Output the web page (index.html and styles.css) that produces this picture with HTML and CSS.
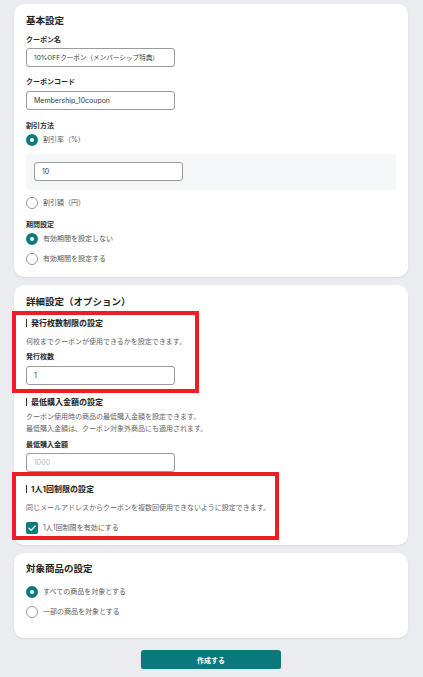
FILE: index.html
```html
<!DOCTYPE html>
<html lang="ja">
<head>
<meta charset="utf-8">
<title>クーポン作成</title>
<link rel="stylesheet" href="styles.css">
</head>
<body>
<main class="page">
  <section class="card card-basic">
    <h2 class="card-title">基本設定</h2>
    <div class="field-label m8">クーポン名</div>
    <div class="input m3"><span class="narrow">10%OFFクーポン（メンバーシップ特典）</span></div>
    <div class="field-label m10">クーポンコード</div>
    <div class="input m4">Membership_10coupon</div>
    <div class="field-label m11">割引方法</div>
    <div class="choice m2"><span class="radio checked"></span><span class="choice-text">割引率（%）</span></div>
    <div class="panel m7"><div class="input">10</div></div>
    <div class="choice m6"><span class="radio"></span><span class="choice-text">割引額（円）</span></div>
    <div class="field-label m10">期間設定</div>
    <div class="choice m2"><span class="radio checked"></span><span class="choice-text">有効期間を設定しない</span></div>
    <div class="choice m55"><span class="radio"></span><span class="choice-text">有効期間を設定する</span></div>
  </section>

  <section class="card card-detail">
    <h2 class="card-title">詳細設定（オプション）</h2>
    <h3 class="sub-title s1"><span class="bar"></span>発行枚数制限の設定</h3>
    <p class="desc d1">何枚までクーポンが使用できるかを設定できます。</p>
    <div class="field-label m55">発行枚数</div>
    <div class="input m35">1</div>
    <h3 class="sub-title s2"><span class="bar"></span>最低購入金額の設定</h3>
    <p class="desc desc-multi">クーポン使用時の商品の最低購入金額を設定できます。<br>最低購入金額は、クーポン対象外商品にも適用されます。</p>
    <div class="field-label m5">最低購入金額</div>
    <div class="input placeholder m3">1000</div>
    <h3 class="sub-title s3"><span class="bar"></span>1人1回制限の設定</h3>
    <p class="desc d1">同じメールアドレスからクーポンを複数回使用できないように設定できます。</p>
    <div class="choice m8"><span class="checkbox"><svg viewBox="0 0 12 12" width="12" height="12"><path d="M3 6.2 L5.1 8.2 L9.2 3.9" fill="none" stroke="#fff" stroke-width="1.3" stroke-linecap="round" stroke-linejoin="round"/></svg></span><span class="choice-text">1人1回制限を有効にする</span></div>
    <div class="highlight hl1"></div>
    <div class="highlight hl2"></div>
  </section>

  <section class="card card-target">
    <h2 class="card-title">対象商品の設定</h2>
    <div class="choice m95"><span class="radio checked"></span><span class="choice-text">すべての商品を対象とする</span></div>
    <div class="choice m6"><span class="radio"></span><span class="choice-text">一部の商品を対象とする</span></div>
  </section>

  <div class="actions"><button class="submit" type="button">作成する</button></div>
</main>
</body>
</html>
```

FILE: styles.css
```css
* { box-sizing: border-box; }
html, body { margin: 0; padding: 0; }
body {
  background: #ebecf0;
  font-family: "Inter", "Noto Sans CJK JP", sans-serif;
  color: #333;
}
.page {
  padding: 4px 15px 0 14px;
}
.card {
  background: #fff;
  border-radius: 10px;
  box-shadow: 0 1px 2px rgba(0, 0, 0, 0.08);
  padding: 11px 12px 11px;
  display: flex;
  flex-direction: column;
  align-items: flex-start;
}
.card-detail {
  margin-top: 8.5px;
  padding-bottom: 10px;
  position: relative;
}
.card-target {
  margin-top: 8.5px;
  padding-top: 10px;
  padding-bottom: 19px;
}
.card-title {
  margin: 0;
  font-size: 9.5px;
  line-height: 12px;
  font-weight: 700;
  color: #222;
}
.field-label {
  font-size: 7px;
  line-height: 10px;
  font-weight: 700;
  color: #2a2a2a;
}
.input {
  width: 149px;
  height: 19px;
  border: 1px solid #9b9b9b;
  border-radius: 3px;
  padding: 0 7px;
  font-size: 7px;
  line-height: 17px;
  color: #3a3a3a;
  background: #fff;
  white-space: nowrap;
}
.narrow { font-size: 6.6px; }
.input.placeholder { color: #b8b8b8; }
.panel {
  align-self: stretch;
  background: #f5f6f8;
  border-radius: 3px;
  padding: 8px 8px 9px;
}
.choice {
  display: flex;
  align-items: center;
  height: 14px;
  gap: 5px;
}
.choice-text {
  font-size: 7px;
  color: #5a5a5a;
  line-height: 10px;
}
.radio {
  width: 12px;
  height: 12px;
  border-radius: 50%;
  border: 1px solid #9a9a9a;
  background: #fff;
  flex: none;
}
.radio.checked {
  border: 4px solid #0d7a7e;
}
.checkbox {
  width: 12px;
  height: 12px;
  border-radius: 2px;
  background: #0d7a7e;
  flex: none;
  display: flex;
}
.sub-title {
  margin: 0;
  display: flex;
  align-items: center;
  gap: 4px;
  font-size: 8px;
  line-height: 12px;
  font-weight: 700;
  color: #222;
}
.bar {
  width: 1px;
  height: 8px;
  background: #333;
}
.desc {
  margin: 0;
  font-size: 7px;
  line-height: 11px;
  color: #666;
}
.desc-multi {
  line-height: 12.3px;
  margin-top: 2.5px;
}
.s1 { margin-top: 9px; }
.s2 { margin-top: 11.5px; }
.s3 { margin-top: 11.3px; }
.d1 { margin-top: 6.5px; }
.m2 { margin-top: 2px; }
.m3 { margin-top: 3px; }
.m35 { margin-top: 3.5px; }
.m4 { margin-top: 4px; }
.m5 { margin-top: 5px; }
.m55 { margin-top: 5.5px; }
.m6 { margin-top: 6px; }
.m7 { margin-top: 7px; }
.m8 { margin-top: 8px; }
.m95 { margin-top: 9.5px; }
.m10 { margin-top: 10px; }
.m11 { margin-top: 11px; }
.highlight {
  position: absolute;
  border: 4px solid #ee1c25;
  pointer-events: none;
}
.hl1 { left: -2px; top: 26px; width: 187px; height: 82px; }
.hl2 { left: -2px; top: 187px; width: 267px; height: 68px; }
.actions {
  display: flex;
  justify-content: center;
  margin-top: 12px;
}
.submit {
  width: 140px;
  height: 19.5px;
  border: none;
  border-radius: 3px;
  background: #0b787d;
  box-shadow: 0 1px 1px rgba(0, 0, 0, 0.35);
  color: #fff;
  font-family: "Inter", "Noto Sans CJK JP", sans-serif;
  font-size: 7px;
  font-weight: 700;
  padding: 0;
}
```
